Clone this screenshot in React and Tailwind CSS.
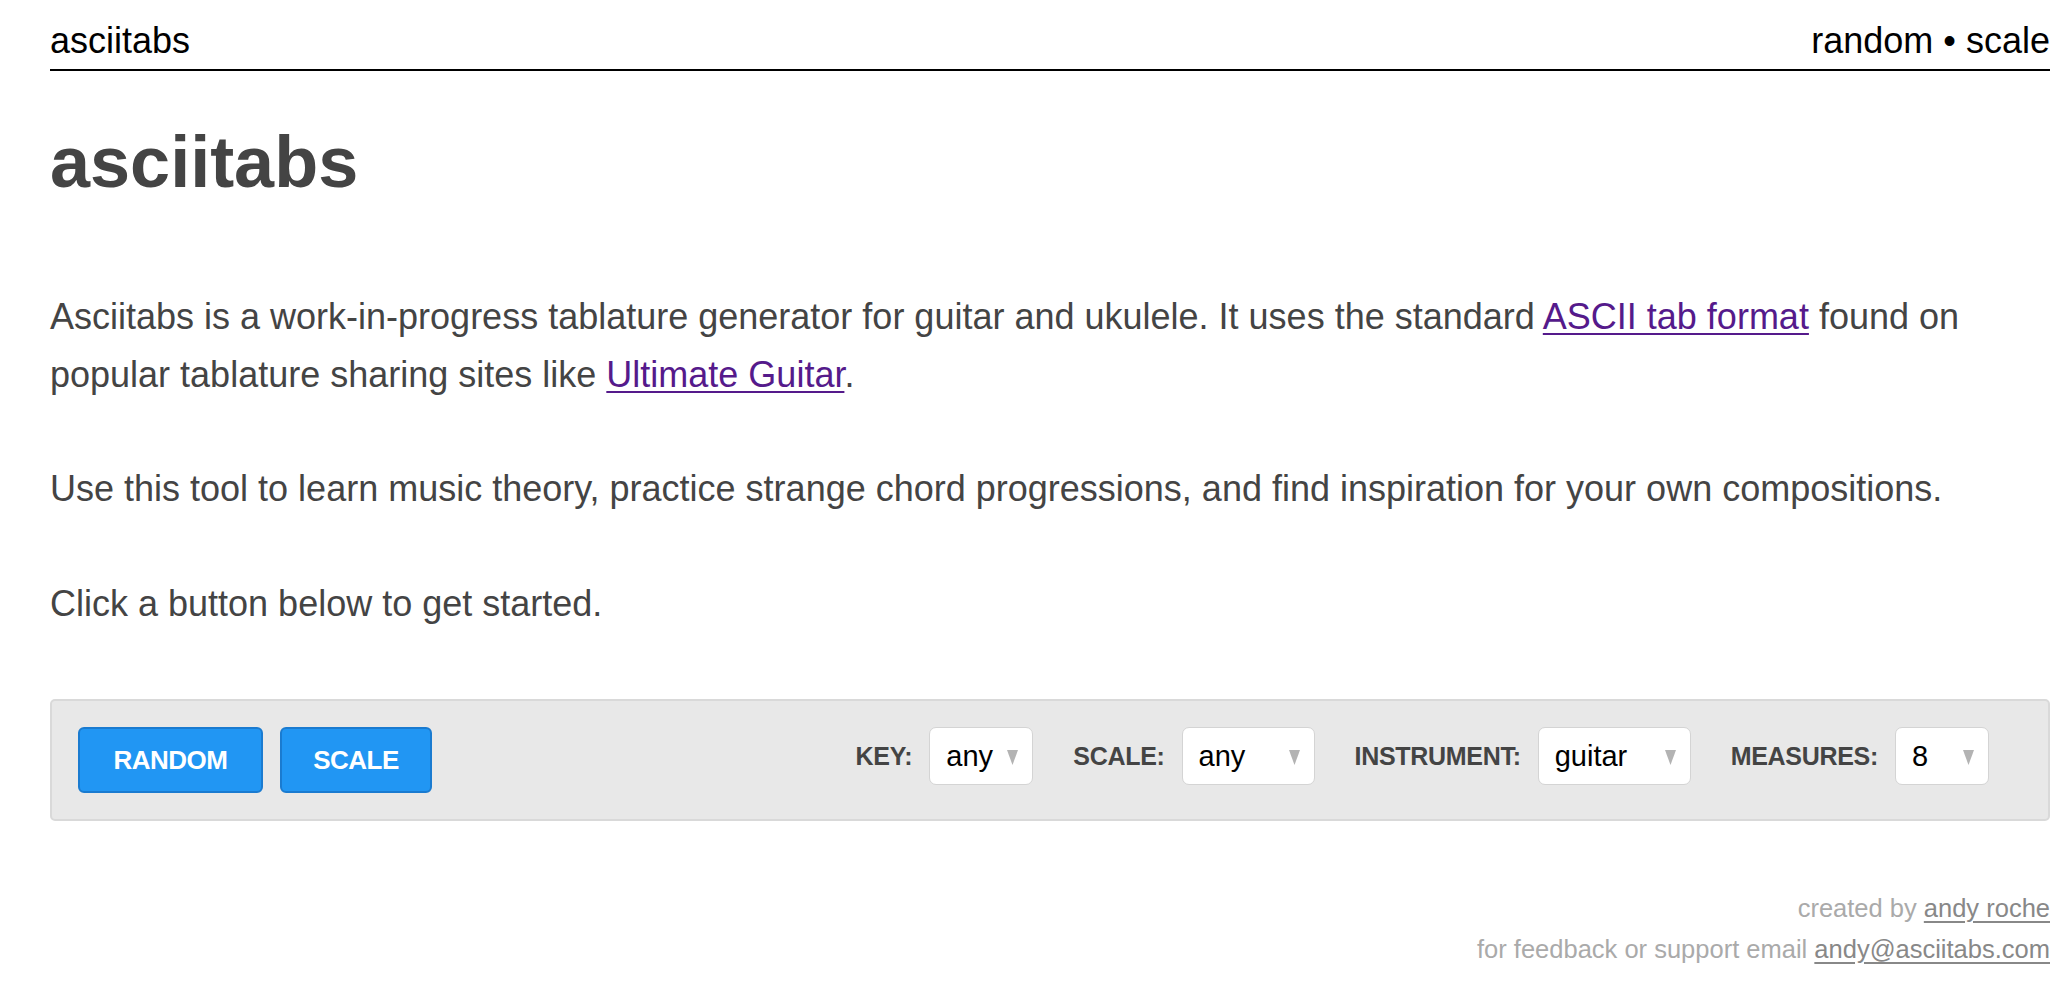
import React from "react"

function Select({ value, width }) {
  return (
    <div
      className={`flex items-center justify-between h-[58px] bg-white border border-[#d4d4d4] rounded-[7px] pl-[16px] pr-[14px] text-[29px] text-black ${width}`}
    >
      <span>{value}</span>
      <svg width="11" height="15" viewBox="0 0 11 15" className="mt-[2px]">
        <polygon points="0,0 11,0 5.5,15" fill="#b3b3b3" />
      </svg>
    </div>
  )
}

function Field({ label, value, width }) {
  return (
    <div className="flex items-center gap-[17px]">
      <span className="text-[25px] font-bold text-[#444] tracking-[-0.3px]">{label}</span>
      <Select value={value} width={width} />
    </div>
  )
}

export default function App() {
  return (
    <div className="min-h-screen bg-white pl-[50px] pr-[22px] font-['Liberation_Sans',Arial,sans-serif]">
      {/* Header */}
      <div className="flex justify-between items-end pt-[20px] pb-[8px] border-b-2 border-black text-[36px] leading-[41px] text-black">
        <a href="#">asciitabs</a>
        <div>
          <a href="#">random</a> • <a href="#">scale</a>
        </div>
      </div>

      <h1 className="mt-[50px] text-[72px] font-bold text-[#444] leading-[83px]">asciitabs</h1>

      {/* Intro */}
      <div className="mt-[84px] text-[36px] leading-[57.6px] text-[#444] space-y-[57px]">
        <p>
          Asciitabs is a work-in-progress tablature generator for guitar and ukulele. It uses the standard{" "}
          <a href="#" className="text-[#551a8b] underline underline-offset-[4px] decoration-2">
            ASCII tab format
          </a>{" "}
          found on popular tablature sharing sites like{" "}
          <a href="#" className="text-[#551a8b] underline underline-offset-[4px] decoration-2">
            Ultimate Guitar
          </a>
          .
        </p>
        <p>Use this tool to learn music theory, practice strange chord progressions, and find inspiration for your own compositions.</p>
        <p>Click a button below to get started.</p>
      </div>

      {/* Controls */}
      <div className="mt-[67px] flex items-center justify-between bg-[#e8e8e8] border-2 border-[#d9d9d9] rounded-[5px] pl-[26px] pr-[59px] py-[26px]">
        <div className="flex gap-[17px]">
          <button className="h-[66px] w-[185px] bg-[#2196f3] border-2 border-[#1a7bd0] rounded-[6px] text-white font-bold text-[26px] tracking-[-0.5px]">
            RANDOM
          </button>
          <button className="h-[66px] w-[152px] bg-[#2196f3] border-2 border-[#1a7bd0] rounded-[6px] text-white font-bold text-[26px] tracking-[-0.5px]">
            SCALE
          </button>
        </div>
        <div className="flex items-center gap-[40px] -mt-[8px]">
          <Field label="KEY:" value="any" width="w-[104px]" />
          <Field label="SCALE:" value="any" width="w-[133px]" />
          <Field label="INSTRUMENT:" value="guitar" width="w-[153px]" />
          <Field label="MEASURES:" value="8" width="w-[94px]" />
        </div>
      </div>

      {/* Footer */}
      <div className="mt-[67px] text-right text-[25.5px] leading-[41px] text-[#aaa]">
        <p>
          created by <a href="#" className="text-[#888] underline underline-offset-[4px]">andy roche</a>
        </p>
        <p>
          for feedback or support email{" "}
          <a href="#" className="text-[#888] underline underline-offset-[4px]">andy@asciitabs.com</a>
        </p>
      </div>
    </div>
  )
}
